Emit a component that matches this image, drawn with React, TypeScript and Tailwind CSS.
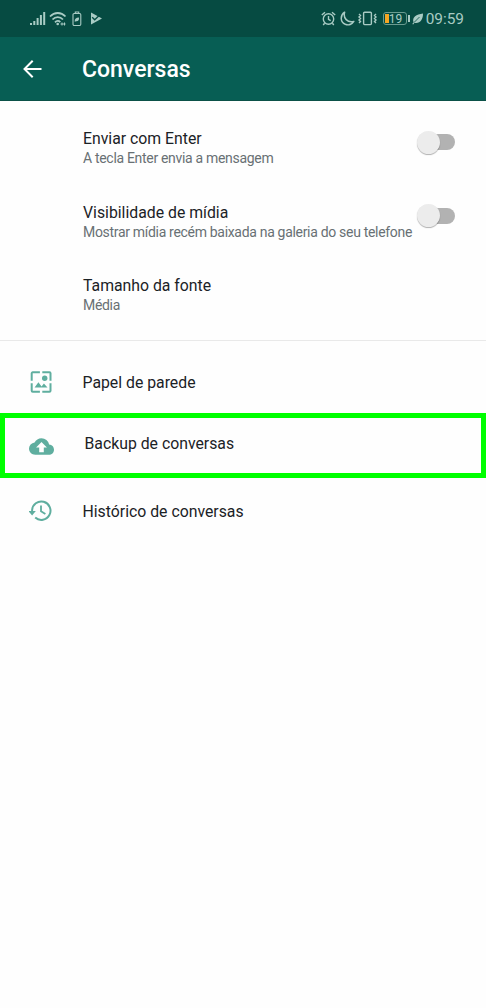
import type { ReactNode } from "react";

interface SettingRowProps {
  title: string;
  description: string;
  toggle?: boolean;
}

function Toggle() {
  return (
    <button
      type="button"
      role="switch"
      aria-checked={false}
      className="mt-px mr-[31px] ml-auto flex h-6 w-[38px] shrink-0 items-center"
    >
      <span className="z-10 size-[23px] shrink-0 rounded-full bg-[#ececec] shadow-[0_1px_1px_rgba(0,0,0,0.3)]" />
      <span className="-ml-3 h-4 w-[27px] rounded-full bg-[#b2b2b2]" />
    </button>
  );
}

function SettingRow({ title, description, toggle }: SettingRowProps) {
  return (
    <div className="flex h-[73.7px] items-start pl-[83px]">
      <div className="whitespace-nowrap">
        <h2 className="text-[15.8px] leading-5 text-[#1b2226]">{title}</h2>
        <p className="text-[14px] leading-[18px] tracking-[-0.31px] text-[#687074]">{description}</p>
      </div>
      {toggle && <Toggle />}
    </div>
  );
}

function SignalIcon() {
  return (
    <svg width="16" height="15" viewBox="0 0 16 15" fill="currentColor">
      <path d="M0 12h2v2H0zM3.3 10h2v4h-2zM6.6 7h2v7h-2zM9.9 4h2v10h-2zM13.2 1h2v13h-2z" />
    </svg>
  );
}

function WifiIcon() {
  return (
    <svg width="18" height="16" viewBox="0 0 18 16" fill="none" stroke="currentColor" strokeWidth="1.8">
      <path d="M1 5.5C5.5.8 12 .8 16.5 5.5M3.5 8.5c3-3.3 7.5-3.3 10.5 0M6 11.3c1.7-1.8 3.8-1.8 5.3-.2" />
      <circle cx="8.7" cy="13" r="1.3" fill="currentColor" stroke="none" />
      <path d="M11.5 13h5M13 11.5v3M15.5 11.5v3" strokeWidth="1" />
    </svg>
  );
}

function BatterySaverIcon() {
  return (
    <svg width="10" height="16" viewBox="0 0 10 16" fill="none" stroke="currentColor" strokeWidth="1.1">
      <path d="M3.3 2.5V1h3.4v1.5" />
      <rect x="1" y="2.5" width="7.8" height="12" rx="1.2" />
      <path d="M2.8 11c-.5-3 1-4.5 4.2-4.5.2 2.8-.8 4.2-3.2 3.8z" fill="currentColor" stroke="none" />
    </svg>
  );
}

function PlayCheckIcon() {
  return (
    <svg width="13" height="13" viewBox="0 0 13 13">
      <path d="M1 .5 12 6.5 1 12.5z" fill="currentColor" />
      <path d="m2.2 5.2 2.5 2.6 5.5-5.3" fill="none" stroke="#064b42" strokeWidth="1.3" />
    </svg>
  );
}

function AlarmIcon() {
  return (
    <svg width="15" height="15" viewBox="0 0 15 15" fill="none" stroke="currentColor" strokeWidth="1.4">
      <circle cx="7.5" cy="8" r="5.2" />
      <path d="M7.5 5v3.3l2.2 1.4M.8 4 4 1.2M14.2 4 11 1.2M3.6 12.2 2.2 14M11.4 12.2l1.4 1.8" />
    </svg>
  );
}

function MoonIcon() {
  return (
    <svg width="15" height="15" viewBox="0 0 15 15" fill="none" stroke="currentColor" strokeWidth="1.5" strokeLinejoin="round">
      <path d="M4.6 1.2C-.2 4.5.3 11.2 5.3 13.3c3.3 1.3 6.8 0 8.5-2.9C7.5 12 2.9 7.2 4.6 1.2z" />
    </svg>
  );
}

function VibrateIcon() {
  return (
    <svg width="19" height="15" viewBox="0 0 19 15" fill="none" stroke="currentColor" strokeWidth="1.4">
      <rect x="5.6" y="1.2" width="7.8" height="12.4" rx="1" />
      <path d="m1 3 1.5 1.5L1 6l1.5 1.5L1 9l1.5 1.5L1 12M18 3l-1.5 1.5L18 6l-1.5 1.5L18 9l-1.5 1.5L18 12" />
    </svg>
  );
}

function LeafIcon() {
  return (
    <svg width="12" height="13" viewBox="0 0 12 13">
      <path d="M1.5 10.3C0 5 4.2 2.4 11 1.5 11.2 7.5 7.8 12 2.5 10.8L1.2 12.5.3 12z" fill="currentColor" />
      <path d="M2 10.5 7.5 5" stroke="#064b42" strokeWidth=".8" />
    </svg>
  );
}

function ArrowBackIcon() {
  return (
    <svg width="20" height="20" viewBox="0 0 20 20" fill="none" stroke="currentColor" strokeWidth="2">
      <path d="M19.5 10H2.5M10.7 1.7 2.5 10l8.2 8.3" />
    </svg>
  );
}

function WallpaperIcon() {
  return (
    <svg width="24" height="24" viewBox="0 0 24 24">
      <path
        d="M10.9 2.3H3.7a1 1 0 0 0-1 1v7.4M13.3 2.3h7.2a1 1 0 0 1 1 1v7.4M10.9 21.7H3.7a1 1 0 0 1-1-1v-7.4M13.3 21.7h7.2a1 1 0 0 0 1-1v-7.4"
        fill="none"
        stroke="currentColor"
        strokeWidth="2"
      />
      <path d="m5.6 17.6 3.8-5.4 3.2 4.4 2.3-3.1 3.6 4.1z" fill="currentColor" />
      <circle cx="15.7" cy="8.3" r="2.7" fill="currentColor" />
    </svg>
  );
}

function BackupIcon() {
  return (
    <svg width="25" height="25" viewBox="0 0 24 24" fill="currentColor">
      <path d="M19.35 10.04A7.49 7.49 0 0 0 12 4C9.11 4 6.6 5.64 5.35 8.04A5.994 5.994 0 0 0 0 14c0 3.31 2.69 6 6 6h13c2.76 0 5-2.24 5-5 0-2.64-2.05-4.78-4.65-4.96zM14.2 13v4.4H9.8V13H6.8L12 7.6l5.2 5.4h-3z" />
    </svg>
  );
}

function HistoryIcon() {
  return (
    <svg width="25" height="24" viewBox="0 0 25 24" fill="none" stroke="currentColor" strokeWidth="2">
      <path d="M3.1 14v-2.6A9.2 9.2 0 1 1 6.2 18.6" />
      <path d="M12 6.6v5.6l4.4 2.9" strokeWidth="1.8" />
      <path d="M-.6 12h7.4l-3.7 4.5z" fill="currentColor" stroke="none" />
    </svg>
  );
}

function StatusBar() {
  return (
    <div className="flex h-[37px] items-center bg-[#064b42] text-[#a9cbc4]">
      <div className="flex items-center pl-[30px]">
        <SignalIcon />
        <span className="ml-[3px]"><WifiIcon /></span>
        <span className="ml-[5px]"><BatterySaverIcon /></span>
        <span className="ml-2"><PlayCheckIcon /></span>
      </div>
      <div className="ml-auto flex items-center pr-[22px]">
        <AlarmIcon />
        <span className="ml-[4px]"><MoonIcon /></span>
        <span className="ml-[3px]"><VibrateIcon /></span>
        <span className="ml-[6px] flex h-[13px] w-[24px] items-center rounded-[3px] border border-[#6a9b90] p-px">
          <span className="h-full w-[4px] shrink-0 bg-[#f5a623]" />
          <span className="text-[12px] leading-none">19</span>
        </span>
        <span className="ml-px h-[7px] w-[2px] bg-current" />
        <span className="ml-[2px]"><LeafIcon /></span>
        <span className="ml-[2px] text-[15.4px] leading-5">09:59</span>
      </div>
    </div>
  );
}

function MenuItem({ icon, label }: { icon: ReactNode; label: string }) {
  return (
    <div className="flex h-[66px] items-center">
      <span className="flex w-[82.5px] shrink-0 pl-[29px] text-[#5fae9f]">{icon}</span>
      <span className="pt-px text-[15.8px] leading-5 text-[#1b2226]">{label}</span>
    </div>
  );
}

export default function App() {
  return (
    <div className="h-[1008px] w-[486px] overflow-hidden bg-[#fefefe] font-[Roboto,sans-serif]">
      <StatusBar />
      <header className="flex h-16 items-center border-b border-[#0b5148] bg-[#075e54] text-white">
        <span className="ml-[22px] flex w-[60px]"><ArrowBackIcon /></span>
        <h1 className="pt-[2px] text-[23px] leading-7 font-medium">Conversas</h1>
      </header>

      <main>
        <section className="h-60 border-b border-[#e9e9e9] pt-7">
          <SettingRow title="Enviar com Enter" description="A tecla Enter envia a mensagem" toggle />
          <SettingRow
            title="Visibilidade de mídia"
            description="Mostrar mídia recém baixada na galeria do seu telefone"
            toggle
          />
          <SettingRow title="Tamanho da fonte" description="Média" />
        </section>

        <section>
          <div className="h-[72px] pt-2">
            <MenuItem icon={<WallpaperIcon />} label="Papel de parede" />
          </div>
          <div className="flex h-[65px] items-center border-[5px] border-[#00ff00]">
            <span className="flex w-[79.5px] shrink-0 pt-[2px] pl-6 text-[#5fae9f]"><BackupIcon /></span>
            <span className="pb-1 text-[15.8px] leading-5 text-[#1b2226]">Backup de conversas</span>
          </div>
          <MenuItem icon={<HistoryIcon />} label="Histórico de conversas" />
        </section>
      </main>
    </div>
  );
}
